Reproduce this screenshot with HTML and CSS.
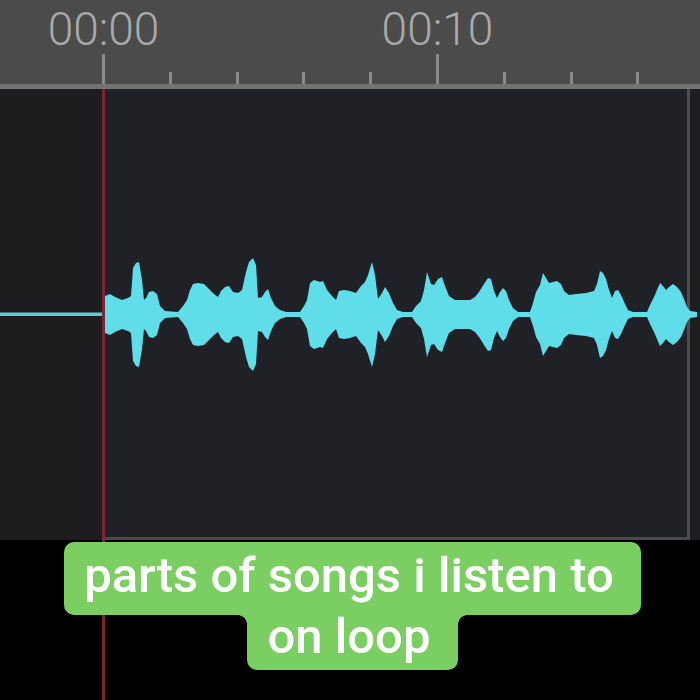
FILE: index.html
```html
<!DOCTYPE html>
<html>
<head>
<meta charset="utf-8">
<link rel="stylesheet" href="styles.css">
</head>
<body>
<div class="screen">
  <div class="ruler">
    <div class="ticks">
      <div class="cell major"><span class="label">00:00</span><i class="tick"></i></div>
      <div class="cell"><i class="tick"></i></div>
      <div class="cell"><i class="tick"></i></div>
      <div class="cell"><i class="tick"></i></div>
      <div class="cell"><i class="tick"></i></div>
      <div class="cell major"><span class="label">00:10</span><i class="tick"></i></div>
      <div class="cell"><i class="tick"></i></div>
      <div class="cell"><i class="tick"></i></div>
      <div class="cell"><i class="tick"></i></div>
    </div>
  </div>
  <div class="ruler-base"></div>
  <div class="track">
    <div class="gutter"></div>
    <div class="clip"></div>
    <div class="tail"></div>
    <svg class="wave" viewBox="0 89 700 451" width="700" height="451">
      <rect x="0" y="312.5" width="104" height="3.5" fill="#68c9d2"/>
      <g fill="#5fdde8">
        <polygon id="upper" points="105,315.5 105,296 110,294 115,297 122,300 128,298 131,296 133,268 136,263 139,262 142,280 144,300 146,298 149,292 153,291 157,294 160,306 165,311 178,312 183,306 187,300 190,290 193,284 198,283 204,284 209,289 214,294 218,297 221,291 225,287 229,286 233,292 238,293 242,290 246,272 249,262 253,258 256,265 258,298 262,297 265,292 268,289 271,298 275,306 280,310 286,312 300,312 304,306 307,300 310,283 314,280 320,282 323,281 327,290 332,296 336,300 339,291 344,290 350,291 356,293 361,286 365,282 368,275 372,262 375,275 378,299 382,293 385,287 389,293 393,303 397,310 403,312 412,312 416,306 421,301 424,290 427,272 431,284 434,285 438,279 442,277 445,286 449,296 455,300 470,300 475,297 479,292 484,284 488,278 491,279 494,291 497,298 500,292 503,288 506,291 509,300 513,308 518,312 530,312 533,303 536,292 540,285 543,273 546,278 549,283 553,282 557,281 561,284 564,291 569,295 576,294 586,293 594,291 597,284 600,271 603,273 606,279 609,290 612,298 615,291 618,290 621,295 625,304 628,310 633,312 647,312 650,305 654,297 657,290 660,283 663,286 666,290 669,287 673,284 677,287 681,292 684,299 687,307 690,311 697,312 697,315.5"/>
        <use href="#upper" transform="translate(0,629) scale(1,-1)"/>
      </g>
    </svg>
  </div>
  <div class="caption">
    <div class="line first">parts of songs i listen to</div>
    <div class="line second">on loop</div>
  </div>
  <div class="playhead"></div>
</div>
</body>
</html>
```

FILE: styles.css
```css
html, body {
  margin: 0;
  padding: 0;
  background: #000;
}

.screen {
  position: relative;
  width: 700px;
  height: 700px;
  overflow: hidden;
  background: #000;
  font-family: Roboto, "Liberation Sans", sans-serif;
}

.ruler {
  height: 84px;
  background: #4b4b4b;
  overflow: hidden;
}

.ticks {
  display: flex;
  height: 84px;
  padding-left: 102px;
}

.cell {
  position: relative;
  flex: 0 0 66.8px;
  display: flex;
  align-items: flex-end;
}

.tick {
  display: block;
  width: 3px;
  height: 12px;
  background: #8b8b8b;
}

.major .tick {
  height: 30px;
}

.label {
  position: absolute;
  left: 1.5px;
  top: 3px;
  transform: translateX(-50%);
  font-size: 46px;
  font-weight: 300;
  line-height: 52px;
  color: #a9a9a9;
  white-space: nowrap;
}

.ruler-base {
  height: 5px;
  background: #737373;
}

.track {
  position: relative;
  display: flex;
  height: 451px;
  background: #1d1d20;
}

.gutter {
  flex: 0 0 102px;
  background: #1d1d20;
}

.clip {
  flex: 0 0 588px;
  box-sizing: border-box;
  background: #202127;
  border-right: 3px solid #4c4c51;
  border-bottom: 3px solid #4a4a4f;
}

.tail {
  flex: 1;
  background: #1e1e21;
}

.wave {
  position: absolute;
  left: 0;
  top: 0;
}

.caption {
  position: relative;
  z-index: 2;
  display: flex;
  flex-direction: column;
  align-items: center;
  margin-top: 2px;
  padding-left: 5px;
  font-size: 49px;
  font-weight: 500;
  color: #fff;
  white-space: nowrap;
}

.line {
  background: #7bcf62;
}

.first {
  padding: 6px 27px 11px 20px;
  line-height: 56px;
  border-radius: 10px;
}

.second {
  position: relative;
  padding: 0 28px 11px 21px;
  line-height: 44px;
  border-radius: 0 0 10px 10px;
}

.second::before,
.second::after {
  content: "";
  position: absolute;
  top: 0;
  width: 9px;
  height: 9px;
}

.second::before {
  left: -9px;
  background: radial-gradient(circle at 0 100%, transparent 8.5px, #7bcf62 9px);
}

.second::after {
  right: -9px;
  background: radial-gradient(circle at 100% 100%, transparent 8.5px, #7bcf62 9px);
}

.playhead {
  position: absolute;
  z-index: 1;
  left: 102px;
  top: 89px;
  width: 3px;
  height: 611px;
  background: #7b2435;
}
```
